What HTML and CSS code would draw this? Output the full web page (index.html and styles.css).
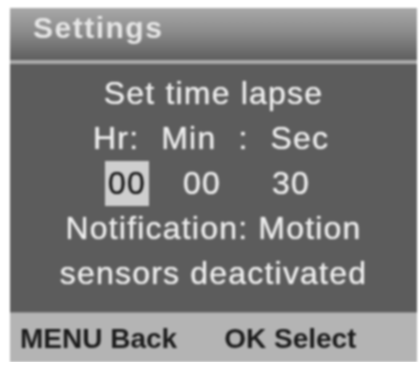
FILE: index.html
```html
<!DOCTYPE html>
<html>
<head>
<meta charset="utf-8">
<link rel="stylesheet" href="styles.css">
</head>
<body>
<div class="screen">
  <div class="header"><span class="title">Settings</span></div>
  <div class="stripe"></div>
  <div class="content">
    <div class="line">Set time lapse</div>
    <div class="row labels">
      <span>Hr:</span><span>Min</span><span>:</span><span>Sec</span>
    </div>
    <div class="row values">
      <span class="sel">00</span><span class="v2">00</span><span class="v3">30</span>
    </div>
    <div class="line">Notification: Motion</div>
    <div class="line">sensors deactivated</div>
  </div>
  <div class="footer">
    <span>MENU Back</span><span>OK Select</span>
  </div>
</div>
</body>
</html>
```
FILE: styles.css
```css
html, body {
  margin: 0;
  padding: 0;
  background: #ffffff;
}
body {
  font-family: "Liberation Sans", Arial, sans-serif;
}
.screen {
  margin: 8px 3px 0 10px;
  width: 407px;
  display: flex;
  flex-direction: column;
  filter: blur(0.9px);
}
.header {
  height: 52px;
  box-sizing: border-box;
  padding: 5px 0 0 23px;
  background: linear-gradient(to bottom, #a8a8a8 0%, #8c8c8c 45%, #5e5e5e 100%);
}
.title {
  font-size: 30px;
  line-height: 30px;
  font-weight: bold;
  letter-spacing: 1.5px;
  color: #e6e6e6;
}
.stripe {
  height: 4px;
  background: #a9a9a9;
}
.content {
  height: 248px;
  box-sizing: border-box;
  padding-top: 7px;
  background: #5c5c5c;
  color: #ededed;
  font-size: 32px;
  line-height: 45px;
  letter-spacing: 1.2px;
  text-shadow: 0 0 1px #ededed;
}
.line {
  text-align: center;
}
.row {
  display: flex;
  height: 45px;
}
.labels {
  padding-left: 83px;
  gap: 22px;
}
.values {
  padding-left: 95px;
}
.sel {
  background: #cfcfcf;
  color: #1e1e1e;
  text-shadow: 0 0 1px #1e1e1e;
  padding: 0 3px;
}
.v2 {
  margin-left: 34px;
}
.v3 {
  margin-left: 51px;
}
.footer {
  height: 50px;
  box-sizing: border-box;
  padding: 12px 0 0 10px;
  background: #b4b4b4;
  border-top: 1px solid #8e8e8e;
  display: flex;
  gap: 47px;
  font-size: 28px;
  line-height: 28px;
  font-weight: bold;
  color: #1c1c1c;
}
```
